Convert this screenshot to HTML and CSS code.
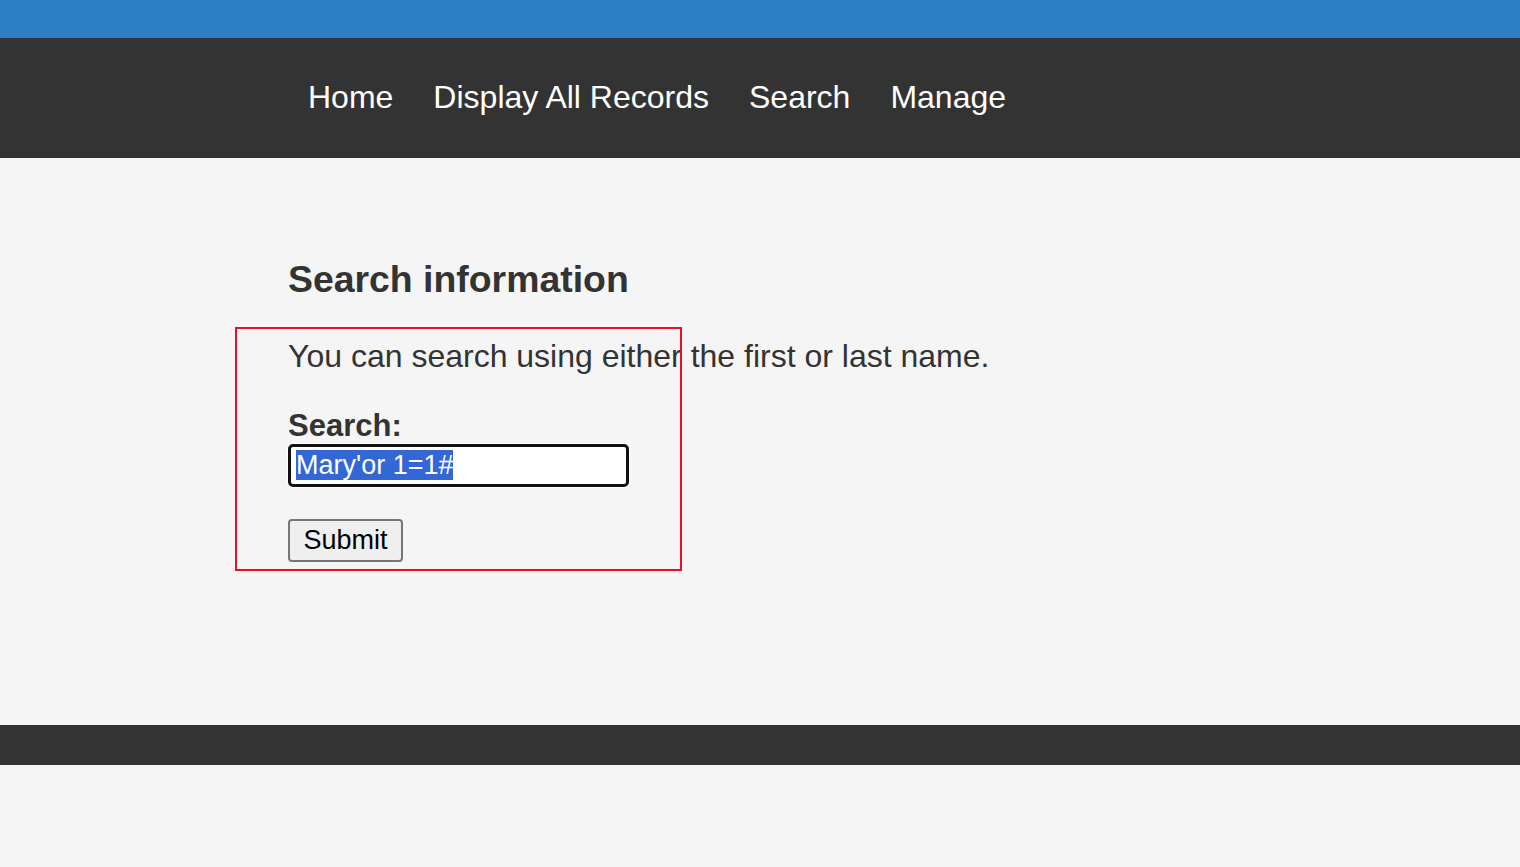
FILE: index.html
```html
<!DOCTYPE html>
<html>
<head>
<meta charset="utf-8">
<link rel="stylesheet" href="styles.css">
</head>
<body>
<div class="topbar"></div>
<nav class="nav">
  <a href="#">Home</a>
  <a href="#">Display All Records</a>
  <a href="#">Search</a>
  <a href="#">Manage</a>
</nav>
<main class="main">
  <div class="highlight-box"></div>
  <h2 class="title">Search information</h2>
  <p class="intro">You can search using either the first or last name.</p>
  <label class="label">Search:</label>
  <div class="field"><span class="sel">Mary'or 1=1#</span></div>
  <button class="submit">Submit</button>
</main>
<footer class="footer"></footer>
</body>
</html>
```
FILE: styles.css
```css
html, body {
  margin: 0;
  padding: 0;
  background: #f5f5f5;
  font-family: "Liberation Sans", Arial, sans-serif;
  color: #333;
}
.topbar {
  height: 38px;
  background: #2c7fc4;
}
.nav {
  height: 120px;
  background: #333;
  display: flex;
  align-items: center;
  padding-left: 308px;
  gap: 40px;
}
.nav a {
  color: #fff;
  text-decoration: none;
  font-size: 32px;
  position: relative;
  top: -1px;
}
.main {
  position: relative;
  height: 567px;
  padding-left: 288px;
  padding-top: 1px;
  box-sizing: border-box;
}
.title {
  font-size: 37.4px;
  font-weight: bold;
  margin: 99px 0 0 0;
}
.highlight-box {
  position: absolute;
  left: 235px;
  top: 169px;
  width: 443px;
  height: 240px;
  border: 2px solid #e81123;
}
.intro {
  font-size: 32px;
  margin: 37px 0 0 0;
}
.label {
  display: block;
  font-size: 31px;
  font-weight: bold;
  margin-top: 33px;
}
.field {
  box-sizing: border-box;
  width: 341px;
  height: 43px;
  border: 3px solid #111;
  border-radius: 5px;
  box-shadow: 0 0 0 1px #fff;
  background: #fff;
  padding: 1px 5px;
  font-size: 27px;
  line-height: 35px;
  color: #000;
}
.sel {
  background: #3367d6;
  color: #fff;
}
.submit {
  display: block;
  margin-top: 32px;
  width: 115px;
  height: 43px;
  background: #efefef;
  border: 2px solid #767676;
  border-radius: 4px;
  font-family: "Liberation Sans", Arial, sans-serif;
  font-size: 27px;
  color: #000;
  padding: 0;
}
.footer {
  height: 40px;
  background: #333;
}
```
